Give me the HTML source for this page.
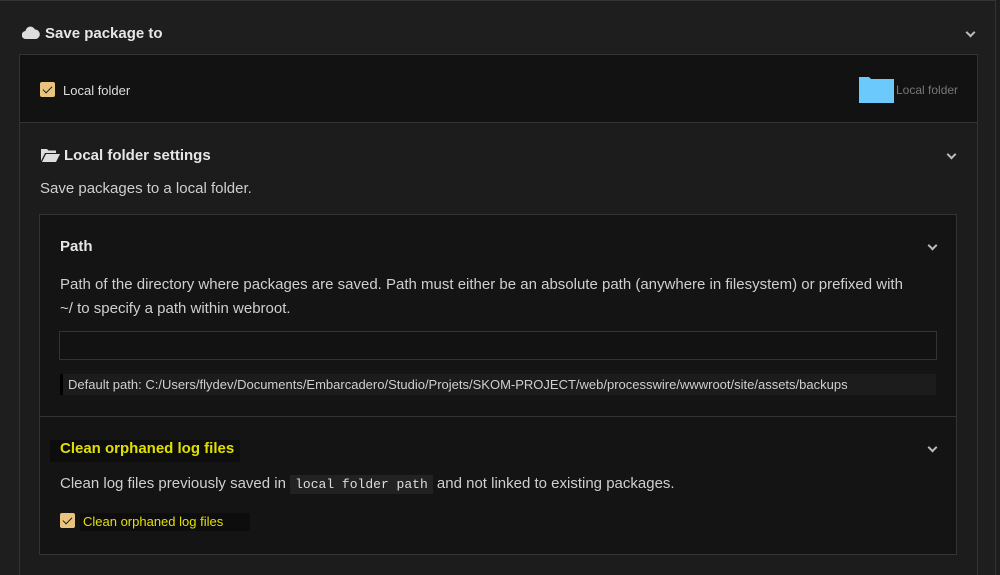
<!DOCTYPE html>
<html><head><style>
*{box-sizing:border-box;margin:0;padding:0}
html,body{width:1000px;height:575px;overflow:hidden}
body{background:#1e1e1e;font-family:"Liberation Sans",sans-serif;color:#d4d4d4;position:relative}
.abs{position:absolute}
.h{font-weight:bold;font-size:15px;color:#e6e6e6}
.chev{position:absolute;width:7px;height:7px;border-right:2px solid #bbb;border-bottom:2px solid #bbb;transform:rotate(45deg)}
.cb{position:absolute;width:15px;height:15px;background:#e8c47f;border-radius:2px}
.cb:after{content:"";position:absolute;left:5px;top:2px;width:4px;height:8px;border-right:1.5px solid #222;border-bottom:1.5px solid #222;transform:rotate(45deg)}
p{font-size:15px;color:#cfcfcf}
</style></head><body>
<div class="abs" style="left:0;top:0;width:996px;height:575px;border-top:1px solid #333;border-right:1px solid #333"></div>
<svg class="abs" style="left:22px;top:26px" width="18" height="13" viewBox="0 0 18 13"><path d="M4 13a4 4 0 0 1-.5-8A5 5 0 0 1 13 3.5 4.8 4.8 0 0 1 14 13z" fill="#ddd"/></svg>
<div class="abs h" style="left:45px;top:25px">Save package to</div>
<div class="chev" style="left:967px;top:29px"></div>
<div class="abs" style="left:19px;top:54px;width:959px;height:530px;border:1px solid #333;background:#1c1c1c"></div>
<div class="abs" style="left:20px;top:55px;width:957px;height:68px;background:#121212;border-bottom:1px solid #333"></div>
<div class="cb" style="left:40px;top:82px"></div>
<div class="abs" style="left:63px;top:83px;font-size:13px;color:#ddd">Local folder</div>
<svg class="abs" style="left:858px;top:76px" width="37" height="28" viewBox="0 0 37 28"><path d="M1 1h10l2 2h23v24H1z" fill="#6cc9fb"/></svg>
<div class="abs" style="left:896px;top:83px;font-size:12px;color:#777">Local folder</div>
<svg class="abs" style="left:41px;top:148px" width="19" height="14" viewBox="0 0 19 14"><path d="M0 1h6l1.5 1.5H15V5H4L0 13z M1 14l4-8h14l-4 8z" fill="#ddd"/></svg>
<div class="abs h" style="left:64px;top:147px">Local folder settings</div>
<div class="chev" style="left:948px;top:151px"></div>
<p class="abs" style="left:40px;top:180px">Save packages to a local folder.</p>
<div class="abs" style="left:39px;top:214px;width:918px;height:341px;border:1px solid #333;background:#141414"></div>
<div class="abs h" style="left:60px;top:238px">Path</div>
<div class="chev" style="left:929px;top:242px"></div>
<p class="abs" style="left:60px;top:273px;width:880px;line-height:24px">Path of the directory where packages are saved. Path must either be an absolute path (anywhere in filesystem) or prefixed with<br>~/ to specify a path within webroot.</p>
<div class="abs" style="left:59px;top:331px;width:878px;height:29px;border:1px solid #333;background:#121212"></div>
<div class="abs" style="left:60px;top:374px;width:876px;height:21px;background:#1c1c1c;border-left:3px solid #000;font-size:13px;color:#cfcfcf;padding:3px 0 0 5px">Default path: C:/Users/flydev/Documents/Embarcadero/Studio/Projets/SKOM-PROJECT/web/processwire/wwwroot/site/assets/backups</div>
<div class="abs" style="left:40px;top:416px;width:916px;height:1px;background:#333"></div>
<div class="abs" style="left:50px;top:440px;width:190px;height:22px;background:#0d0d0d"></div>
<div class="abs h" style="left:60px;top:440px;color:#e0e000">Clean orphaned log files</div>
<div class="chev" style="left:929px;top:444px"></div>
<p class="abs" style="left:60px;top:475px">Clean log files previously saved in <span style="font-family:'Liberation Mono',monospace;font-size:13px;background:#222;padding:2px 5px;color:#ddd">local folder path</span> and not linked to existing packages.</p>
<div class="abs" style="left:80px;top:513px;width:170px;height:18px;background:#0d0d0d"></div>
<div class="cb" style="left:60px;top:513px"></div>
<div class="abs" style="left:83px;top:514px;font-size:13px;color:#e0e000">Clean orphaned log files</div>
</body></html>
